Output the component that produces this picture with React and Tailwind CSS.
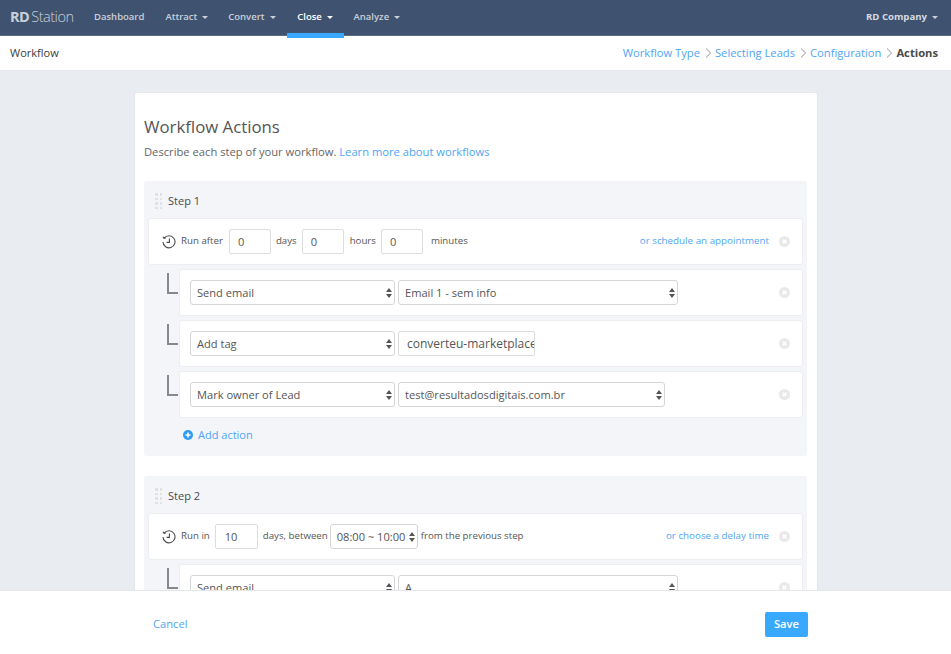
const font = { fontFamily: '"Open Sans", sans-serif' };

function Caret({ className = 'border-t-[#c9d0da]' }) {
  return <span className={`ml-[5px] inline-block h-0 w-0 border-x-[3px] border-t-[3px] border-x-transparent ${className}`} />;
}

function NavItem({ label, caret = true, active = false }) {
  return (
    <a className={`relative flex h-[36px] items-center justify-center text-[9.5px] font-semibold ${active ? 'w-[57px] text-white' : 'text-[#c9d0da]'}`}>
      {label}
      {caret && <Caret className={active ? 'border-t-white' : 'border-t-[#c9d0da]'} />}
      {active && <span className="absolute -bottom-[2px] left-0 right-0 h-[5px] bg-[#38a9ff]" />}
    </a>
  );
}

function Crumb() {
  return (
    <svg width="15" height="10" viewBox="0 0 15 10" fill="none" stroke="#888" strokeWidth="0.9" className="shrink-0">
      <path d="M6 .5 10.6 5 6 9.5" />
    </svg>
  );
}

function Clock() {
  return (
    <svg width="14" height="14" viewBox="0 0 14 14" fill="none" stroke="#4a4a4a" strokeWidth="1.1" className="shrink-0">
      <path d="M2.2 3.2A6 6 0 1 1 1 7" />
      <path d="M1 1.9 2.1 3.4 3.7 3" />
      <path d="M7.4 3.4V7.4H4.6" />
    </svg>
  );
}

function CloseDot() {
  return (
    <svg width="11" height="11" viewBox="0 0 11 11" className="shrink-0">
      <circle cx="5.5" cy="5.5" r="5.5" fill="#e9e9e9" />
      <path d="M3.7 3.7 7.3 7.3M7.3 3.7 3.7 7.3" stroke="#fff" strokeWidth="1.6" />
    </svg>
  );
}

function Select({ value, className }) {
  return (
    <div className={`flex h-[25px] shrink-0 items-center justify-between rounded-[3px] border border-[#d5d6d8] bg-white pl-[6px] pr-[2px] text-[11.1px] text-[#555] ${className}`}>
      <span className="whitespace-nowrap pt-[1px]">{value}</span>
      <svg width="6" height="10" viewBox="0 0 6 10" fill="#555" className="shrink-0">
        <path d="M3 0 6 4H0Z" />
        <path d="M3 10 0 6H6Z" />
      </svg>
    </div>
  );
}

function Input({ value, className }) {
  return (
    <div className={`flex h-[25px] shrink-0 items-center overflow-hidden rounded-[2px] border border-[#dcdddf] bg-white text-[#555] ${className}`}>
      <span className="whitespace-nowrap pt-[1px]">{value}</span>
    </div>
  );
}

function Handle() {
  return (
    <div className="grid grid-cols-2 gap-x-[2px] gap-y-[2px]">
      {[0, 1, 2, 3, 4, 5, 6, 7].map((i) => (
        <span key={i} className="h-[2.5px] w-[2.5px] bg-[#dfe1e5]" />
      ))}
    </div>
  );
}

function StepHeader({ title }) {
  return (
    <div className="flex h-[37px] items-center gap-[6px] pl-[11px] pt-[3px] text-[11px] text-[#4a4a4a]">
      <Handle />
      <span>{title}</span>
    </div>
  );
}

function ScheduleRow({ children, link }) {
  return (
    <div className="mx-[4px] flex h-[47px] items-center rounded-[3px] border border-[#eceef2] bg-white pl-[13px] pr-[12px] text-[9.7px] text-[#555]">
      <Clock />
      <div className="ml-[5px] flex items-center">{children}</div>
      <a className="ml-auto mr-[10px] text-[9.8px] text-[#4fa5f5]">{link}</a>
      <CloseDot />
    </div>
  );
}

function ActionRow({ children }) {
  return (
    <div className="flex">
      <div className="w-[35px] shrink-0 pl-[23px] pt-[4px]">
        <div className="h-[21px] w-[11px] border-b-2 border-l-2 border-[#85888e]" />
      </div>
      <div className="mr-[4px] flex h-[47px] flex-1 items-center rounded-[3px] border border-[#eceef2] bg-white pl-[10px] pr-[12px]">
        <div className="flex items-center gap-[3px]">{children}</div>
        <div className="ml-auto"><CloseDot /></div>
      </div>
    </div>
  );
}

export default function App() {
  return (
    <div className="flex h-screen flex-col overflow-hidden bg-[#e9ecf1]" style={font}>
      <header className="flex h-[36px] shrink-0 items-center justify-between border-b border-[#5a6c85] bg-[#3f5370] pl-[10px] pr-[13px]">
        <div className="flex items-center">
          <div className="w-[84px] text-[14.5px] leading-none tracking-[-0.5px] text-[#c9d0da]">
            <span className="font-bold">RD</span><span className="ml-[2px] font-light">Station</span>
          </div>
          <nav className="flex items-center">
            <NavItem label="Dashboard" caret={false} />
            <span className="w-[21px]" />
            <NavItem label="Attract" />
            <span className="w-[20px]" />
            <NavItem label="Convert" />
            <span className="w-[11px]" />
            <NavItem label="Close" active />
            <span className="w-[10px]" />
            <NavItem label="Analyze" />
          </nav>
        </div>
        <a className="flex items-center text-[9.6px] font-bold text-[#d5dae1]">RD Company<Caret /></a>
      </header>

      <div className="flex h-[35px] shrink-0 items-center justify-between border-b border-[#e4e6ea] bg-white pl-[10px] pr-[13px]">
        <span className="text-[11px] text-[#3a3a3a]">Workflow</span>
        <div className="flex items-center text-[11.2px] text-[#4fa5f5]">
          <a>Workflow Type</a>
          <Crumb />
          <a>Selecting Leads</a>
          <Crumb />
          <a>Configuration</a>
          <Crumb />
          <span className="font-bold text-[#4a4a4a]">Actions</span>
        </div>
      </div>

      <main className="min-h-0 flex-1 overflow-hidden pt-[21px]">
        <div className="ml-[134px] w-[684px] rounded-[3px] border border-[#e4e6ea] bg-white pb-[20px] pl-[9px] pr-[10px] pt-[22px]">
          <h1 className="text-[16.8px] leading-[24px] text-[#555]">Workflow Actions</h1>
          <p className="mt-[4px] text-[11.2px] leading-[18px] text-[#666]">
            Describe each step of your workflow. <a className="text-[#4fa5f5]">Learn more about workflows</a>
          </p>

          <section className="mt-[20px] h-[275px] rounded-[3px] bg-[#f3f5f9]">
            <StepHeader title="Step 1" />
            <ScheduleRow link="or schedule an appointment">
              <span>Run after</span>
              <Input value="0" className="ml-[6px] w-[42px] pl-[8px] text-[11.1px]" />
              <span className="ml-[5px]">days</span>
              <Input value="0" className="ml-[5px] w-[42px] pl-[8px] text-[11.1px]" />
              <span className="ml-[6px]">hours</span>
              <Input value="0" className="ml-[5px] w-[42px] pl-[8px] text-[11.1px]" />
              <span className="ml-[8px]">minutes</span>
            </ScheduleRow>
            <div className="mt-[4px] flex flex-col gap-[4px]">
              <ActionRow>
                <Select value="Send email" className="w-[205px]" />
                <Select value="Email 1 - sem info" className="w-[280px]" />
              </ActionRow>
              <ActionRow>
                <Select value="Add tag" className="w-[205px]" />
                <Input value="converteu-marketplace" className="w-[137px] pl-[8px] text-[12px]" />
              </ActionRow>
              <ActionRow>
                <Select value="Mark owner of Lead" className="w-[205px]" />
                <Select value="test@resultadosdigitais.com.br" className="w-[267px]" />
              </ActionRow>
            </div>
            <a className="ml-[39px] mt-[9px] flex items-center gap-[5px] text-[11px] text-[#4fa5f5]">
              <svg width="10" height="10" viewBox="0 0 10 10" className="shrink-0">
                <circle cx="5" cy="5" r="5" fill="#2d9cf2" />
                <path d="M5 2.5V7.5M2.5 5H7.5" stroke="#fff" strokeWidth="1.5" />
              </svg>
              Add action
            </a>
          </section>

          <section className="mt-[20px] rounded-[3px] bg-[#f3f5f9] pb-[12px]">
            <StepHeader title="Step 2" />
            <ScheduleRow link="or choose a delay time">
              <span>Run in</span>
              <Input value="10" className="ml-[5px] w-[43px] pl-[9px] text-[11.1px]" />
              <span className="ml-[5px]">days, between</span>
              <Select value="08:00 ~ 10:00" className="ml-[2px] w-[88px]" />
              <span className="ml-[3px]">from the previous step</span>
            </ScheduleRow>
            <div className="mt-[4px]">
              <ActionRow>
                <Select value="Send email" className="w-[205px]" />
                <Select value="A" className="w-[280px]" />
              </ActionRow>
            </div>
          </section>
        </div>
      </main>

      <footer className="flex h-[64px] shrink-0 items-center justify-between border-t border-[#e4e6ea] bg-white pl-[153px] pr-[143px] pt-[4px]">
        <a className="text-[11.2px] text-[#4fa5f5]">Cancel</a>
        <button className="h-[25px] w-[43px] rounded-[2px] bg-[#38a9ff] text-[11.2px] font-semibold text-white">Save</button>
      </footer>
    </div>
  );
}
